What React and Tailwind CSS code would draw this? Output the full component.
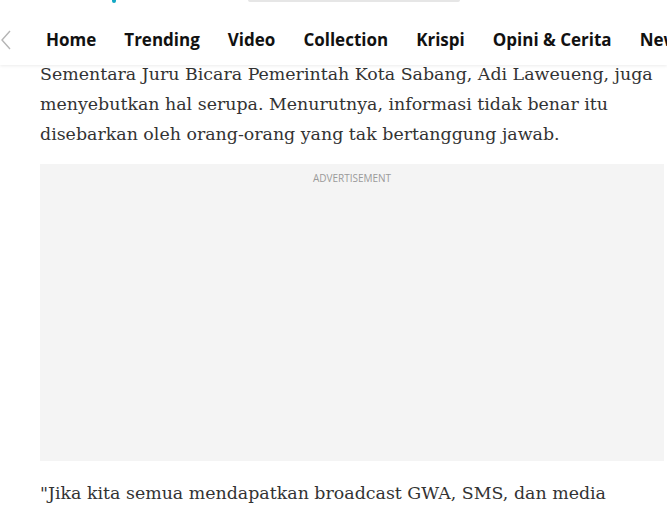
const NAV = ['Home', 'Trending', 'Video', 'Collection', 'Krispi', 'Opini & Cerita', 'News']

export default function App() {
  return (
    <div className="h-[509px] w-full overflow-hidden bg-white">
      <header className="relative z-10 h-[65px] bg-white shadow-[0_1px_3px_rgba(0,0,0,0.08)]">
        {/* the logo row above has scrolled away, only its bottom edge shows */}
        <div className="flex h-[3px] items-start">
          <span className="ml-[112px] h-[3px] w-[4px] rounded-b-full bg-[#14a8c4]" />
          <span className="ml-[132px] h-[2px] w-[212px] rounded-b bg-[#e6e6e6]" />
        </div>
        <div className="flex h-[62px] items-center overflow-hidden pt-[11px]">
          <svg className="h-[20px] w-[12px] shrink-0" viewBox="0 0 12 20" fill="none">
            <path d="M10 1 L2 10 L10 19" stroke="#b5b5b5" strokeWidth="1.4" />
          </svg>
          <nav className="ml-[34px] flex gap-[28px] whitespace-nowrap font-['Open_Sans',sans-serif] text-[17px] font-bold text-[#111]">
            {NAV.map((n) => (
              <span key={n}>{n}</span>
            ))}
          </nav>
        </div>
      </header>

      <main className="-mt-[6px] pl-[40px] pr-[3px] font-['DejaVu_Serif',serif] text-[17.4px] leading-[30px] text-[#333]">
        <p className="max-w-[618px]">
          Sementara Juru Bicara Pemerintah Kota Sabang, Adi Laweueng, juga menyebutkan hal serupa.
          Menurutnya, informasi tidak benar itu disebarkan oleh orang-orang yang tak bertanggung
          jawab.
        </p>

        <div className="mt-[15px] flex h-[297px] justify-center bg-[#f4f4f4] pt-[7px]">
          <span className="font-['Open_Sans',sans-serif] text-[10px] leading-[14px] text-[#9a9a9a]">
            ADVERTISEMENT
          </span>
        </div>

        <p className="mt-[17px] max-w-[618px]">
          "Jika kita semua mendapatkan broadcast GWA, SMS, dan media sosial lainnya yang
          menyebutkan hal tersebut, itu tidak benar," katanya.
        </p>
      </main>
    </div>
  )
}
